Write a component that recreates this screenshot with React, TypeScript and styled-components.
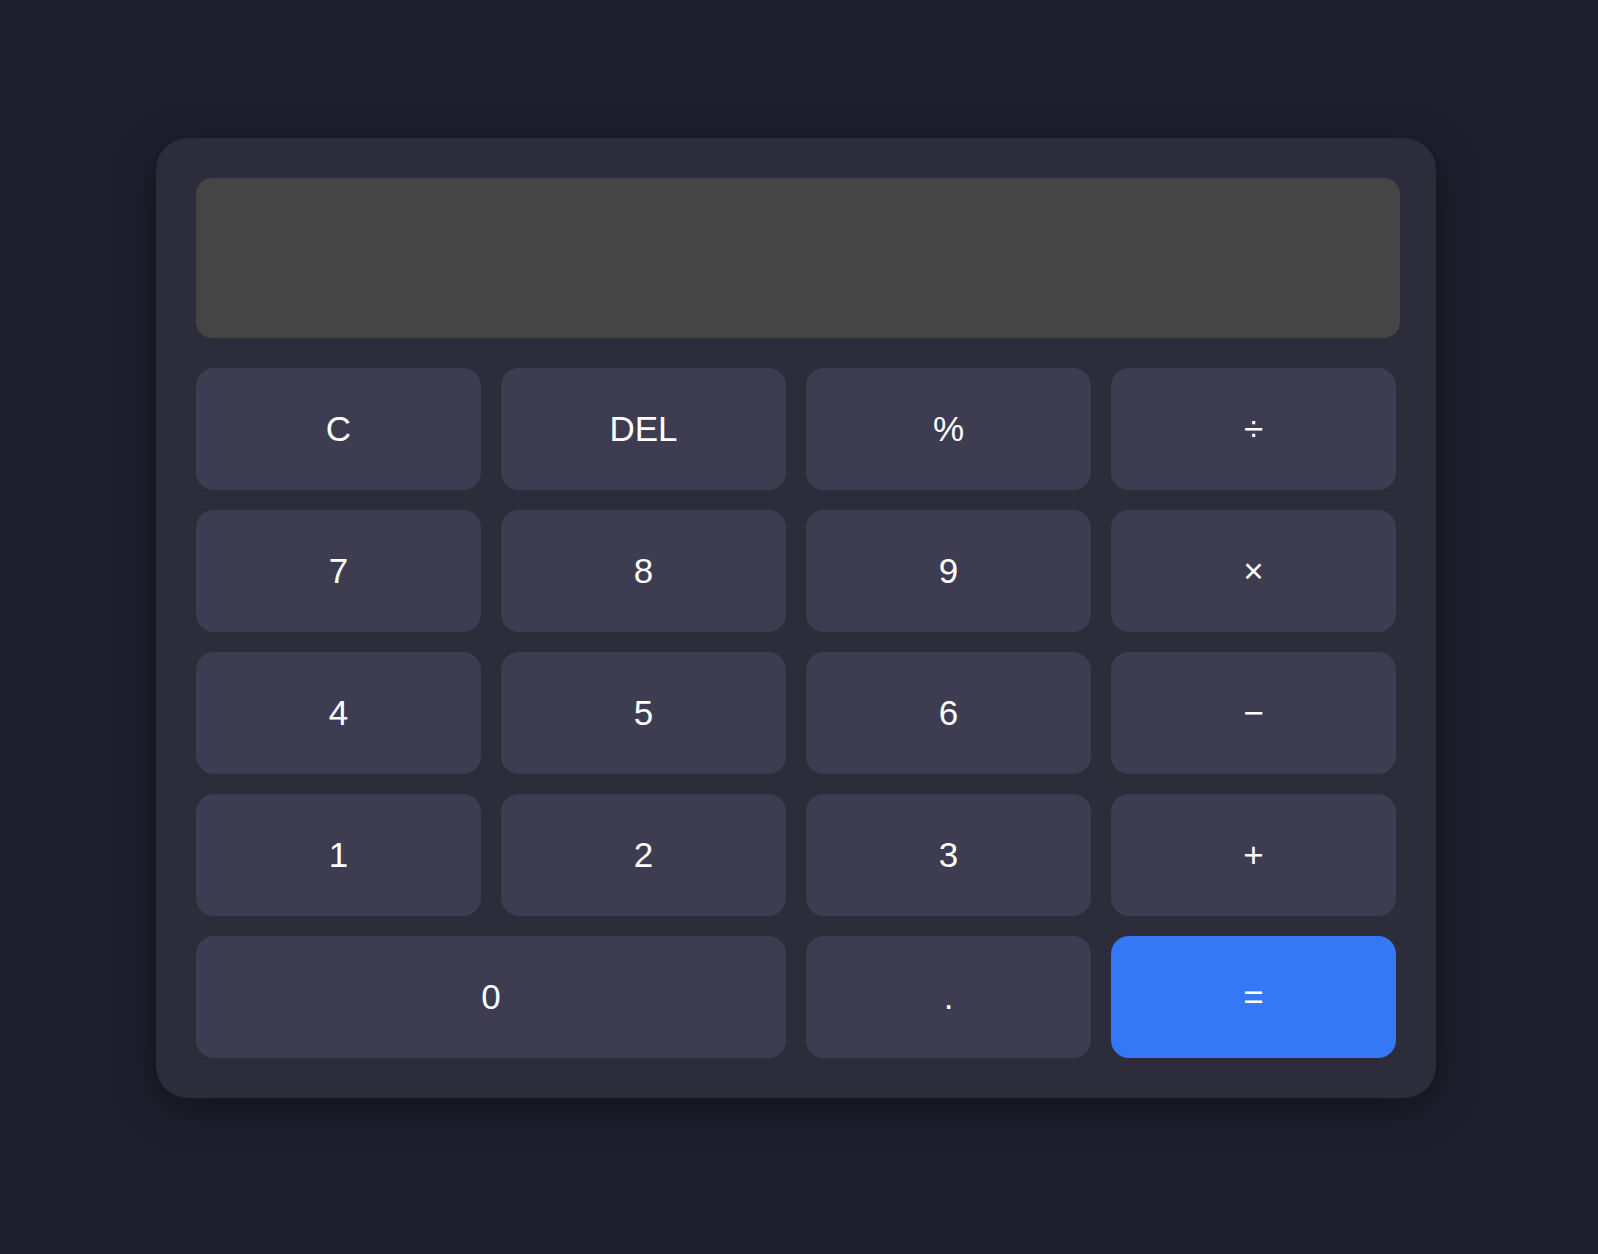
import React from "react";
import styled, { createGlobalStyle } from "styled-components";

const GlobalStyle = createGlobalStyle`
  html, body {
    margin: 0;
    padding: 0;
    background: #1e1e2d;
  }
  body {
    font-family: "Liberation Sans", Arial, sans-serif;
  }
`;

const Page = styled.div`
  min-height: 100vh;
  box-sizing: border-box;
  display: flex;
  align-items: flex-start;
  padding: 138px 0 0 156px;
`;

const Calculator = styled.div`
  width: 1280px;
  box-sizing: border-box;
  padding: 40px 36px 40px 40px;
  background: #2d2c3b;
  border-radius: 32px;
  box-shadow: 0 10px 40px rgba(0, 0, 0, 0.35);
  display: flex;
  flex-direction: column;
  gap: 30px;
`;

const Display = styled.div`
  height: 160px;
  background: #454545;
  border-radius: 16px;
`;

const Keypad = styled.div`
  display: grid;
  grid-template-columns: repeat(4, 285px);
  grid-auto-rows: 122px;
  gap: 20px;
  justify-content: start;
`;

const Key = styled.button<{ $accent?: boolean; $span?: number }>`
  grid-column: span ${(p) => p.$span ?? 1};
  border: none;
  margin: 0;
  padding: 0;
  border-radius: 18px;
  background: ${(p) => (p.$accent ? "#3478f6" : "#3d3c50")};
  color: #ffffff;
  font-family: "Liberation Sans", Arial, sans-serif;
  font-size: 35px;
  font-weight: 400;
  display: flex;
  align-items: center;
  justify-content: center;
  cursor: pointer;
`;

const keys: { label: string; span?: number; accent?: boolean }[] = [
  { label: "C" },
  { label: "DEL" },
  { label: "%" },
  { label: "÷" },
  { label: "7" },
  { label: "8" },
  { label: "9" },
  { label: "×" },
  { label: "4" },
  { label: "5" },
  { label: "6" },
  { label: "−" },
  { label: "1" },
  { label: "2" },
  { label: "3" },
  { label: "+" },
  { label: "0", span: 2 },
  { label: "." },
  { label: "=", accent: true },
];

export default function App() {
  return (
    <>
      <GlobalStyle />
      <Page>
        <Calculator>
          <Display />
          <Keypad>
            {keys.map((k) => (
              <Key key={k.label} $span={k.span} $accent={k.accent}>
                {k.label}
              </Key>
            ))}
          </Keypad>
        </Calculator>
      </Page>
    </>
  );
}
